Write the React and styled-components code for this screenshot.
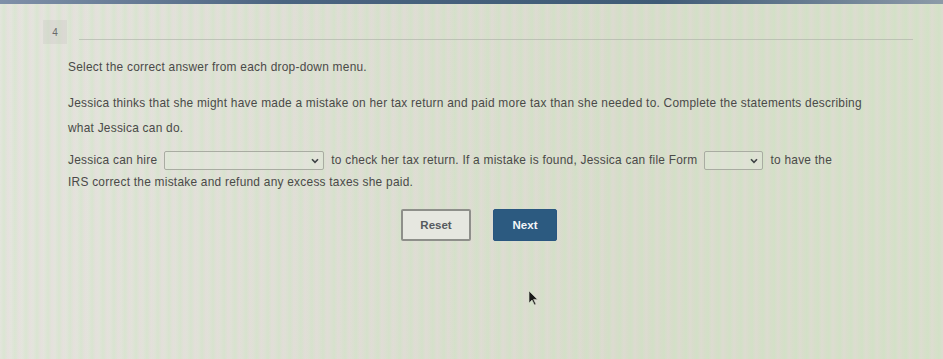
import React from "react";
import styled, { createGlobalStyle } from "styled-components";

const Global = createGlobalStyle`
  html, body { margin: 0; padding: 0; }
  body {
    width: 943px;
    height: 359px;
    overflow: hidden;
    font-family: "Liberation Sans", Arial, sans-serif;
    background:
      repeating-linear-gradient(90deg, rgba(200,230,190,0.0) 0px, rgba(200,230,190,0.35) 4px, rgba(235,215,225,0.25) 8px, rgba(200,230,190,0.0) 11px),
      linear-gradient(90deg, #e4e5dd 0%, #dddfd3 35%, #d8dccb 65%, #d8dfcb 100%);
  }
`;

const Page = styled.div`
  position: relative;
  width: 943px;
  height: 359px;
  display: flex;
  flex-direction: column;
`;

const TopBar = styled.div`
  height: 4px;
  background: linear-gradient(90deg, #7f90a8 0%, #4b6480 30%, #3f5b76 70%, #8c9aa8 100%);
`;

const Header = styled.div`
  display: flex;
  align-items: flex-end;
  gap: 12px;
  padding: 16px 30px 0 43px;
`;

const NumberBox = styled.div`
  width: 24px;
  height: 24px;
  background: rgba(200, 200, 195, 0.35);
  color: #6a6a6a;
  font-size: 10px;
  display: flex;
  align-items: center;
  justify-content: center;
`;

const Rule = styled.div`
  flex: 1;
  height: 1px;
  margin-bottom: 4px;
  background: rgba(170, 175, 165, 0.6);
`;

const Content = styled.div`
  padding: 11px 0 0 68px;
  color: #4a4a48;
  font-size: 11.9px;
  letter-spacing: 0.25px;
`;

const Instruction = styled.p`
  margin: 0 0 12px;
  line-height: 24px;
`;

const Para = styled.p`
  margin: 0;
  line-height: 25px;
  width: 815px;
`;

const Statement = styled.p`
  margin: 8px 0 0;
  line-height: 22px;
  width: 785px;
`;

const Select = styled.span`
  display: inline-flex;
  align-items: center;
  justify-content: flex-end;
  box-sizing: border-box;
  width: ${(p) => p.$w}px;
  height: 19px;
  vertical-align: middle;
  margin: 0 7px 0 7px;
  border: 1px solid #a9aca2;
  border-radius: 2px;
  background: rgba(232, 234, 226, 0.35);
  padding-right: 4px;
`;

const Buttons = styled.div`
  display: flex;
  gap: 22px;
  padding: 16px 0 0 401px;
`;

const Button = styled.button`
  box-sizing: border-box;
  width: ${(p) => p.$w}px;
  height: 32px;
  font-family: "Liberation Sans", Arial, sans-serif;
  font-size: 11.5px;
  font-weight: bold;
  border-radius: 2px;
  cursor: pointer;
  border: ${(p) => (p.$primary ? "1px solid #2a5680" : "2px solid #8e8f8a")};
  background: ${(p) => (p.$primary ? "#2c5a80" : "#e6e7e0")};
  color: ${(p) => (p.$primary ? "#f4f6f8" : "#555a5e")};
`;

const Cursor = styled.svg`
  position: absolute;
  left: 528px;
  top: 290px;
`;

const Chevron = () => (
  <svg width="8" height="6" viewBox="0 0 8 6">
    <path d="M1 1.2 L4 4.4 L7 1.2" fill="none" stroke="#3e4245" strokeWidth="1.6" />
  </svg>
);

export default function App() {
  return (
    <>
      <Global />
      <Page>
        <TopBar />
        <Header>
          <NumberBox>4</NumberBox>
          <Rule />
        </Header>
        <Content>
          <Instruction>Select the correct answer from each drop-down menu.</Instruction>
          <Para>
            Jessica thinks that she might have made a mistake on her tax return and paid more tax than she needed to. Complete the statements describing what Jessica can do.
          </Para>
          <Statement>
            <span>Jessica can hire</span>
            <Select $w={160}>
              <Chevron />
            </Select>
            <span>to check her tax return. If a mistake is found, Jessica can file Form</span>
            <Select $w={59}>
              <Chevron />
            </Select>
            <span>to have the IRS correct the mistake and refund any excess taxes she paid.</span>
          </Statement>
        </Content>
        <Buttons>
          <Button $w={70}>Reset</Button>
          <Button $w={64} $primary>Next</Button>
        </Buttons>
        <Cursor width="10" height="16" viewBox="0 0 10 16">
          <path d="M1 1 L1 13 L4 10 L6.5 15 L8 14.3 L5.6 9.4 L9.5 9.4 Z" fill="#1a1a1a" stroke="#d8dccc" strokeWidth="0.6" />
        </Cursor>
      </Page>
    </>
  );
}
